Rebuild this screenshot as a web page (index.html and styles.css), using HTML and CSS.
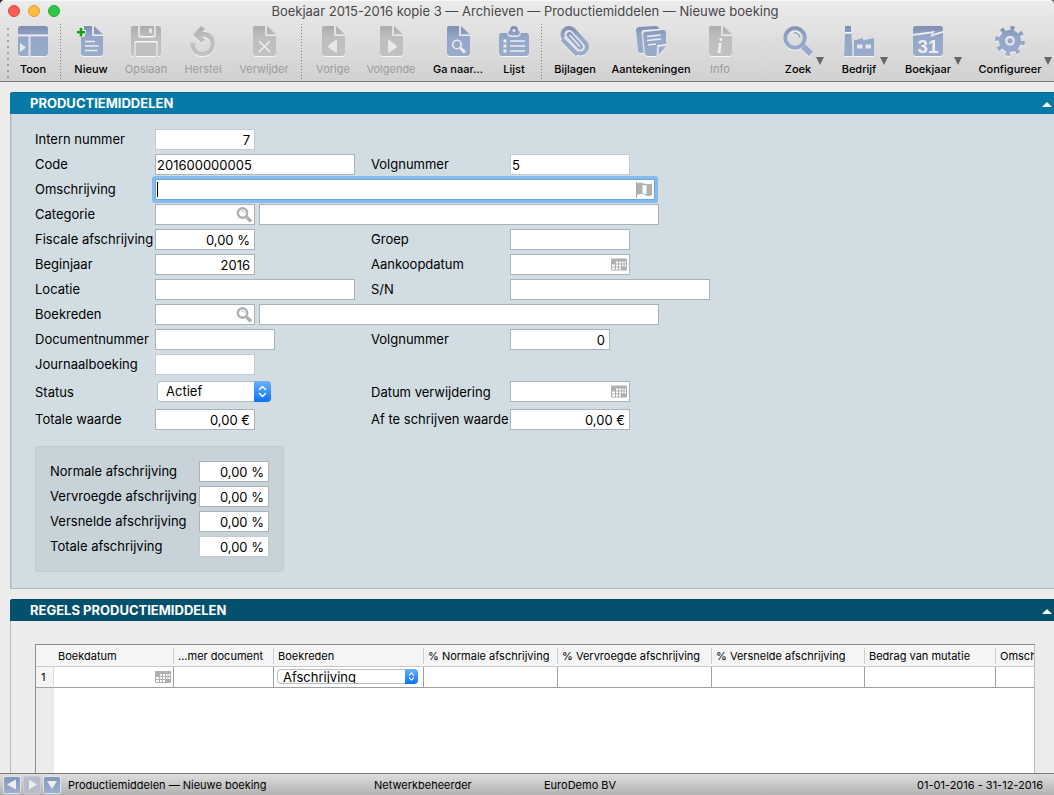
FILE: index.html
```html
<!DOCTYPE html>
<html lang="nl">
<head>
<meta charset="utf-8">
<title>Boekjaar 2015-2016 kopie 3 — Archieven — Productiemiddelen — Nieuwe boeking</title>
<link rel="stylesheet" href="styles.css">
</head>
<body>
<svg class="defs" width="0" height="0" aria-hidden="true">
  <defs>
    <linearGradient id="blue" x1="0" y1="0" x2="0" y2="30" gradientUnits="userSpaceOnUse"><stop offset="0" stop-color="#7f8fb0"/><stop offset=".35" stop-color="#93a6c8"/><stop offset="1" stop-color="#9aaccc"/></linearGradient>
    <linearGradient id="gray" x1="0" y1="0" x2="0" y2="30" gradientUnits="userSpaceOnUse"><stop offset="0" stop-color="#acacac"/><stop offset=".35" stop-color="#bdbdbd"/><stop offset="1" stop-color="#c2c2c2"/></linearGradient>
    <symbol id="page" viewBox="0 0 30 30"><path d="M6 0H16V10H27V27Q27 30 24 30H7Q4 30 4 27V2Q4 0 6 0Z"/><path d="M18 0L27 8.500H18Z"/></symbol>
    <symbol id="lens" viewBox="0 0 16 16"><circle cx="6.500" cy="6" r="4.700" fill="none" stroke="#b0b0b0" stroke-width="2.400"/><path d="M5.500 4.200Q8 3.500 8.600 6" fill="none" stroke="#c4c4c4"/><path d="M10.500 10L15 14.500" stroke="#b0b0b0" stroke-width="3.400"/></symbol>
    <symbol id="cal" viewBox="0 0 16 13"><rect width="16" height="12" rx="1" fill="#b0b0b0"/><path d="M5 3h2v2H5zM8 3h2v2H8zM11 3h1.500v2H11zM13.500 3H15v2h-1.500zM1 6h3v2H1zM5 6h2v2H5zM8 6h2v2H8zM11 6h1.500v2H11zM13.500 6H15v2h-1.500zM1 9h3v2H1zM5 9h2v2H5zM8 9h2v2H8z" fill="#fff"/></symbol>
    <symbol id="updown" viewBox="0 0 17 21"><path d="M5.500 8.500L8.500 5.500L11.500 8.500M5.500 12.500L8.500 15.500L11.500 12.500" fill="none" stroke="#fff" stroke-width="1.500" stroke-linecap="round" stroke-linejoin="round"/></symbol>
  </defs>
</svg>

<header class="chrome">
  <div class="titlebar">
    <div class="lights">
      <button class="light red" aria-label="Sluit"></button>
      <button class="light amber" aria-label="Minimaliseer"></button>
      <button class="light green" aria-label="Vergroot"></button>
    </div>
    <h1>Boekjaar 2015-2016 kopie 3 — Archieven — Productiemiddelen — Nieuwe boeking</h1>
  </div>
  <div class="toolbar">
    <div class="group first">
      <span class="grip"></span>
      <button class="tool t42"><svg viewBox="0 0 30 30"><path d="M3 0H27Q30 0 30 3V8.500H0V3Q0 0 3 0ZM0 10.500H10.500V30H3Q0 30 0 27ZM12.500 10.500H30V27Q30 30 27 30H12.500Z"/><path d="M2 17L8 21.500L2 26Z" class="lite"/></svg>Toon</button>
    </div>
    <div class="group">
      <button class="tool t56"><svg viewBox="0 0 30 30"><path d="M8 0H16V10H27V27Q27 30 24 30H8Q5 30 5 27V11H9V8H10V4H8Z"/><path d="M18 0L27 8.500H18Z"/><path d="M9 15.500H19M9 20H22.500M9 24.500H21.500" class="line"/><path d="M5 2V10.500M1 6.200H9" stroke="#12a312" stroke-width="2.600" fill="none"/></svg>Nieuw</button>
      <button class="tool t54" disabled><svg viewBox="0 0 30 30"><path d="M2 0H7V9Q7 12 10 12H22Q25 12 25 9V0H28L30 2V28Q30 30 28 30H27V17Q27 15 25 15H5Q3 15 3 17V30H2Q0 30 0 28V2Q0 0 2 0Z"/><path d="M9 0H23V8Q23 10 21 10H11Q9 10 9 8Z"/><path d="M18 2.500H21V7H18Z" class="lite"/><path d="M5 18Q5 17 6 17H24Q25 17 25 18V30H5Z"/></svg>Opslaan</button>
      <button class="tool t60" disabled><svg viewBox="0 0 30 30"><path d="M13 0L17 3L14.500 6Q26 6 27 17Q26 30 14 30Q3 30 2 17H6.500Q7.500 26 14.500 26Q22.500 25 22.500 17.500Q22 11 14 10.500L17 14L13.500 17L5 9Z"/></svg>Herstel</button>
      <button class="tool t62" disabled><svg viewBox="0 0 30 30"><use href="#page"/><path d="M10 15L21 26M21 15L10 26" class="line"/></svg>Verwijder</button>
    </div>
    <div class="group">
      <button class="tool t50" disabled><svg viewBox="0 0 30 30"><use href="#page"/><path d="M19 14.500V25.500Q19 27.500 17 26L10.500 21.500Q9.500 20.500 10.500 19.500L17 14.500Q19 13 19 14.500Z" class="lite"/></svg>Vorige</button>
      <button class="tool t66" disabled><svg viewBox="0 0 30 30"><use href="#page"/><path d="M12 14.500V25.500Q12 27.500 14 26L20.500 21.500Q21.500 20.500 20.500 19.500L14 14.500Q12 13 12 14.500Z" class="lite"/></svg>Volgende</button>
      <button class="tool t68"><svg viewBox="0 0 30 30"><use href="#page"/><circle cx="14" cy="18.500" r="4.300" class="line"/><path d="M17.500 22L22 26.500" class="line thick"/></svg>Ga naar...</button>
      <button class="tool t44"><svg viewBox="0 0 30 30"><path d="M3 7H8Q9 11 12 11H18Q21 11 22 7H27Q30 7 30 10V27Q30 30 27 30H3Q0 30 0 27V10Q0 7 3 7Z"/><path fill-rule="evenodd" d="M15 0Q19 0 19 4Q19 5 21 6Q20.500 9.500 18 9.500H12Q9.500 9.500 9 6Q11 5 11 4Q11 0 15 0ZM15 3A1.600 1.600 0 1 0 15 6.200A1.600 1.600 0 1 0 15 3Z"/><path d="M11 15H26M11 20H26M11 25H26" class="line"/><path d="M4.500 15H7.500M4.500 20H7.500M4.500 25H7.500" class="line thick"/></svg>Lijst</button>
    </div>
    <div class="group">
      <button class="tool t60"><svg viewBox="0 0 30 30"><g class="clip"><path d="M9 8.500L20.500 21" class="w17"/><path d="M4 14.500L16 27" class="w5"/><path d="M4.500 11.500L18 25" class="cut"/><path d="M9 8.500L20.500 21" class="w9 cut"/><path d="M9.500 9L20 20.500" class="w7"/><path d="M10 9.500L19.500 20" class="cut"/></g></svg>Bijlagen</button>
      <button class="tool t92"><svg viewBox="0 0 30 30"><path d="M3 1L20 0Q22.500 0 23 3L8 4Q5 4.500 5.500 7L7.500 27H4Q2 27 2 25L0 4Q0 1.500 3 1Z"/><path d="M9 6L27 4Q30 4 30 7L30 18L22 19Q21 19 21 21L20.500 30H12Q9.500 30 9 27.500L7 9Q7 6.500 9 6Z"/><path d="M23 21L30 20L23 29Z"/><path d="M11 10.500L24.500 9M11 14.500L25 13M12 19L20 18" class="line"/></svg>Aantekeningen</button>
      <button class="tool t46" disabled><svg viewBox="0 0 30 30"><use href="#page"/><text x="12" y="27" class="info">i</text></svg>Info</button>
    </div>
    <div class="menus">
      <button class="menu"><span class="tool t32"><svg viewBox="0 0 30 30"><circle cx="12" cy="12" r="9.700" class="ink"/><path d="M11 7Q16 7 17 12" class="ink thin"/><path d="M20 20.500L28 28" class="ink fat"/></svg>Zoek</span><i></i></button>
      <button class="menu"><span class="tool t38"><svg viewBox="0 0 30 30"><path d="M1 0H7V6H1ZM1 8H7.500L8.500 30H0ZM10 14.500L19 12V14.500L30 12V30H10Z"/><path d="M13 18.500H18.500V22.500H13ZM21.500 18.500H27V22.500H21.500Z" class="lite"/></svg>Bedrijf</span><i></i></button>
      <button class="menu"><span class="tool t48"><svg viewBox="0 0 30 30"><path d="M3 0H27Q30 0 30 3V5L20 8L22 5L0 8V3Q0 0 3 0Z"/><path d="M0 10L19 7.500L17 11L30 7V27Q30 30 27 30H3Q0 30 0 27Z"/><text x="15" y="27" class="day">31</text></svg>Boekjaar</span><i></i></button>
      <button class="menu"><span class="tool t64"><svg viewBox="0 0 30 30"><circle cx="15" cy="15" r="8" class="ink gear"/><circle cx="15" cy="15" r="12.700" class="ink teeth"/><circle cx="15" cy="15" r="2.500"/></svg>Configureer</span><i></i></button>
    </div>
  </div>
</header>

<main>
  <section class="panel assets">
    <h2>PRODUCTIEMIDDELEN<i></i></h2>
    <form class="body">
      <div class="row"><label for="intern">Intern nummer</label><input id="intern" class="w100 num soft" value="7"></div>
      <div class="row"><label for="code">Code</label><input id="code" class="w200" value="201600000005"><label for="volg1">Volgnummer</label><input id="volg1" class="w120 soft" value="5"></div>
      <div class="row"><label for="oms">Omschrijving</label><span class="field w500 wide"><input id="oms" class="focused"><svg class="flag" viewBox="0 0 16 16"><path d="M.500 0V16" stroke="#a8a8a8"/><path d="M1 1Q4 0 6 1T16 2V13Q12 15 9 13T1 13Z" fill="#b0b0b0"/><path d="M6.500 3Q8.500 3.500 10.500 3V12Q8.500 12 6.500 11.500Z" fill="#fff"/></svg></span></div>
      <div class="row"><label for="cat">Categorie</label><span class="wide pair"><span class="field w100"><input id="cat"><svg><use href="#lens"/></svg></span><input class="w400" aria-label="Categorie omschrijving"></span></div>
      <div class="row"><label for="fisc">Fiscale afschrijving</label><input id="fisc" class="w100 num" value="0,00 %"><label for="groep">Groep</label><input id="groep" class="w120"></div>
      <div class="row"><label for="begin">Beginjaar</label><input id="begin" class="w100 num" value="2016"><label for="aank">Aankoopdatum</label><span class="field w120"><input id="aank"><svg><use href="#cal"/></svg></span></div>
      <div class="row"><label for="loc">Locatie</label><input id="loc" class="w200"><label for="sn">S/N</label><input id="sn" class="w200"></div>
      <div class="row"><label for="reden">Boekreden</label><span class="wide pair"><span class="field w100"><input id="reden"><svg><use href="#lens"/></svg></span><input class="w400" aria-label="Boekreden omschrijving"></span></div>
      <div class="row"><label for="doc">Documentnummer</label><input id="doc" class="w120"><label for="volg2">Volgnummer</label><input id="volg2" class="w100 num" value="0"></div>
      <div class="row"><label for="jour">Journaalboeking</label><input id="jour" class="w100 soft"></div>
      <div class="row status"><label for="stat">Status</label><span class="popup"><select id="stat"><option>Actief</option></select><svg><use href="#updown"/></svg></span><label for="verw">Datum verwijdering</label><span class="field w120"><input id="verw"><svg><use href="#cal"/></svg></span></div>
      <div class="row"><label for="tot">Totale waarde</label><input id="tot" class="w100 num" value="0,00 €"><label for="af">Af te schrijven waarde</label><input id="af" class="w120 num" value="0,00 €"></div>
      <fieldset>
        <div class="pct"><label for="p1">Normale afschrijving</label><input id="p1" class="w70 num" value="0,00 %"></div>
        <div class="pct"><label for="p2">Vervroegde afschrijving</label><input id="p2" class="w70 num" value="0,00 %"></div>
        <div class="pct"><label for="p3">Versnelde afschrijving</label><input id="p3" class="w70 num" value="0,00 %"></div>
        <div class="pct"><label for="p4">Totale afschrijving</label><input id="p4" class="w70 num soft" value="0,00 %"></div>
      </fieldset>
    </form>
  </section>

  <section class="panel lines">
    <h2>REGELS PRODUCTIEMIDDELEN<i></i></h2>
    <div class="list">
      <div class="grid">
        <table>
          <thead><tr><th></th><th>Boekdatum</th><th>...mer document</th><th>Boekreden</th><th>% Normale afschrijving</th><th>% Vervroegde afschrijving</th><th>% Versnelde afschrijving</th><th>Bedrag van mutatie</th><th>Omschrijving</th></tr></thead>
          <tbody><tr><td class="no">1</td><td><div class="date"><svg><use href="#cal"/></svg></div></td><td></td><td><span class="popup mini"><select aria-label="Boekreden"><option>Afschrijving</option></select><svg><use href="#updown"/></svg></span></td><td></td><td></td><td></td><td></td><td></td></tr></tbody>
        </table>
      </div>
    </div>
  </section>
</main>

<footer>
  <div class="nav">
    <button aria-label="Vorige"><svg viewBox="0 0 16 16"><path d="M12 2.500V12.500L3 7.500Z"/></svg></button>
    <button aria-label="Volgende" disabled><svg viewBox="0 0 16 16"><path d="M5 2.500V12.500L13 7.500Z"/></svg></button>
    <button aria-label="Menu"><svg viewBox="0 0 16 16"><path d="M3 4H13L8 12Z"/></svg></button>
  </div>
  <span class="where">Productiemiddelen — Nieuwe boeking</span>
  <span class="user">Netwerkbeheerder</span>
  <span>EuroDemo BV</span>
  <span class="period">01-01-2016 - 31-12-2016</span>
</footer>
</body>
</html>
```
FILE: styles.css
```css
* { box-sizing: border-box; }
body {
  margin: 0;
  height: 100vh;
  display: flex;
  flex-direction: column;
  overflow: hidden;
  background: linear-gradient(90deg, #20262e, #76708c);
  font: 13px/16px Inter, "Liberation Sans", sans-serif;
  color: #000;
}
button, input, select { font: inherit; color: inherit; margin: 0; }
button { border: 0; padding: 0; background: none; }
.defs { position: absolute; }

.chrome {
  flex: none;
  border-radius: 5px 5px 0 0;
  border-bottom: 1px solid #7c7c7c;
  box-shadow: inset 0 1px 0 #f8f8f8;
  background: linear-gradient(#ebebeb, #d1d1d1);
}
.titlebar { display: flex; align-items: center; height: 22px; padding: 0 10px 0 8px; }
.titlebar h1 { flex: 1; margin: 0 54px 0 0; font-size: 13px; font-weight: 400; text-align: center; color: #484848; white-space: nowrap; }
.lights { display: flex; gap: 8px; width: 52px; }
.light { width: 12px; height: 12px; border-radius: 50%; border: 1px solid; }
.red { background: #fc5b57; border-color: #e04744; }
.amber { background: #fdbc40; border-color: #dfa033; }
.green { background: #30c749; border-color: #24aa37; }

.toolbar { display: flex; height: 59px; padding-top: 2px; }
.group { display: flex; padding: 0 5px 0 4px; }
.group + .group { background: repeating-linear-gradient(#808080 0 1px, transparent 1px 3px) 0 0 / 1px 55px no-repeat; }
.group.first { padding: 0 6px 0 7px; }
.group:nth-child(2) { padding: 0 6px 0 3px; }
.group:nth-child(3) { padding-left: 7px; }
.grip { width: 3px; height: 50px; margin: 4px 2px 0 0; background: repeating-linear-gradient(#a0a0a0 0 2px, transparent 2px 6px) 0 0 / 2px 100% no-repeat; }
.tool { display: flex; flex-direction: column; align-items: center; gap: 6px; padding-top: 2px; font-size: 11px; line-height: 14px; font-weight: 500; white-space: nowrap; }
.tool svg { width: 30px; height: 30px; flex: none; overflow: visible; fill: url(#blue); filter: drop-shadow(0 1px 0 #f6f6f6); }
.tool:disabled { color: #9c9c9c; font-weight: 400; }
.tool:disabled svg { fill: url(#gray); }
.tool .lite { fill: #e8e8e8; }
.tool .line { fill: none; stroke: #eee; stroke-width: 1.6; }
.tool .thick { stroke-width: 3; }
.tool .ink { fill: none; stroke: url(#blue); stroke-width: 4; }
.tool .thin { stroke-width: 1.5; }
.tool .fat { stroke-width: 6; }
.tool .gear { stroke-width: 6; }
.tool .teeth { stroke-width: 4.6; stroke-dasharray: 4 5.975; }
.clip { fill: none; stroke: url(#blue); stroke-linecap: round; }
.clip .w17 { stroke-width: 17; }
.clip .w9 { stroke-width: 9; }
.clip .w7 { stroke-width: 6; }
.clip .w5 { stroke-width: 5; }
.clip .cut { stroke: #e8e8e8; }
.clip .cut:not(.w9) { stroke-width: 1.5; }
.info { font: italic bold 20px "Liberation Serif", serif; fill: #eee; }
.day { font: bold 19px "Liberation Sans", sans-serif; fill: #eee; text-anchor: middle; }
.t32 { width: 32px; } .t38 { width: 38px; } .t42 { width: 42px; } .t44 { width: 44px; }
.t46 { width: 46px; } .t48 { width: 48px; } .t50 { width: 50px; } .t54 { width: 54px; }
.t56 { width: 56px; } .t60 { width: 60px; } .t62 { width: 62px; } .t64 { width: 64px; }
.t66 { width: 66px; } .t68 { width: 68px; } .t92 { width: 92px; }
.menus { display: flex; gap: 16px; margin-left: auto; padding-right: 2px; }
.menu { display: flex; align-items: flex-start; gap: 2px; }
.menu .tool { flex: none; }
.menu i { margin-top: 33px; border: 4px solid transparent; border-top: 8px solid #666; border-bottom: 0; }

main { flex: 1; min-height: 0; display: flex; flex-direction: column; gap: 10px; padding: 10px 0 0 10px; background: #ececec; overflow: hidden; }
.panel { display: flex; flex-direction: column; flex: none; }
.panel h2 {
  display: flex; align-items: center; justify-content: space-between;
  height: 22px; margin: 0; padding: 0 2px 0 20px;
  border-radius: 3px 0 0 0;
  color: #fff; font-size: 13px; line-height: 22px; font-weight: 700;
}
.panel h2 i { margin-top: 3px; border: 5px solid transparent; border-bottom: 5px solid #fff; border-top: 0; }
.assets h2 { background: #0679a6; box-shadow: inset 0 1px 0 #056a92; }
.lines h2 { background: #04516d; box-shadow: inset 0 1px 0 #04475f; }

.body {
  display: flex; flex-direction: column; gap: 4px;
  padding: 15px 24px 16px;
  background: #d1dde2;
  border: solid #b0babd; border-width: 0 0 1px 1px;
  box-shadow: inset 1px 0 0 #c2cdd1;
}
.row { display: grid; grid-template-columns: 120px 216px 139px 1fr; align-items: center; height: 21px; }
.row.status { height: 26px; padding: 2px 0 3px; }
.row label, .pct label { white-space: nowrap; padding-bottom: 2px; }
.row.status label { padding-bottom: 0; }
.wide { grid-column: 2 / -1; }
.pair { display: flex; gap: 4px; }
input {
  height: 21px; padding: 1px 1px 0;
  border: 1px solid #aab4b8; border-radius: 0; outline: 0;
  background: #fff;
}
.soft { border-color: #c3cdd1; }
.num { text-align: right; padding-right: 4px; }
.w70 { width: 70px; } .w100 { width: 100px; } .w120 { width: 120px; }
.w200 { width: 200px; } .w400 { width: 400px; } .w500 { width: 500px; }
.field { position: relative; display: flex; }
.field input { width: 100%; }
.field svg { position: absolute; right: 3px; top: 3px; width: 16px; height: 16px; }
.focused {
  border-color: #6ba5e0; box-shadow: 0 0 0 3px #86bbee; border-radius: 1px;
  background: linear-gradient(#000, #000) 1px 2px / 1px 15px no-repeat #fff;
}
.popup { position: relative; display: flex; width: 114px; height: 21px; margin-left: 2px; }
.popup select {
  appearance: none; width: 100%; height: 100%; padding: 0 20px 1px 8px;
  border: 1px solid #b4bdc2; border-radius: 4px; background: #fff; outline: 0;
}
.popup svg { position: absolute; right: 0; top: 0; width: 17px; height: 100%; border-radius: 0 4px 4px 0; background: linear-gradient(#6bb1fa, #0b73fb); pointer-events: none; }

fieldset {
  align-self: flex-start; display: flex; flex-direction: column; gap: 4px;
  margin: 12px 0 0; padding: 14px; width: 249px; height: 126px;
  border: 1px solid #bfcbd0; border-radius: 4px; background: #c7d3d8;
}
.pct { display: flex; align-items: center; justify-content: space-between; height: 21px; }

.panel.lines { flex: 1; min-height: 0; }
.list {
  flex: 1; min-height: 0; display: flex;
  padding: 23px 19px 0 24px; border-left: 1px solid #bbb;
}
.grid {
  flex: 1; min-width: 0; overflow: hidden;
  border: solid #8f8f8f; border-width: 1px 1px 0; border-right-color: #bbb;
  background: linear-gradient(90deg, #ececec 18px, #fff 18px);
}
table { width: 100%; table-layout: fixed; border-collapse: separate; border-spacing: 0; font-size: 11px; line-height: 14px; }
th:nth-child(1) { width: 18px; } th:nth-child(2) { width: 120px; } th:nth-child(3) { width: 100px; }
th:nth-child(4) { width: 150px; } th:nth-child(5) { width: 134px; } th:nth-child(6) { width: 154px; }
th:nth-child(7) { width: 153px; } th:nth-child(8) { width: 131px; }
th {
  height: 22px; padding: 0 4px; text-align: left; font-weight: 400; white-space: nowrap; overflow: hidden;
  border-bottom: 1px solid #c8c8c8;
  background: linear-gradient(#d0d0d0, #d0d0d0) 100% 3px / 1px 16px no-repeat #f5f5f5;
}
td { height: 21px; padding: 0; border-right: 1px solid #a0a0a0; border-bottom: 1px solid #a0a0a0; background: #fff; }
.no { padding-left: 5px; background: #f5f5f5; border-right-color: #ddd; }
th:first-child, th:last-child { background-image: none; }
th:last-child { padding-right: 0; }
td:last-child { border-right: 0; }
.date { display: flex; justify-content: flex-end; padding-right: 2px; }
.date svg { width: 16px; height: 13px; }
.popup.mini { width: 141px; height: 15px; margin: -2px 0 0 3px; font-size: 13px; line-height: 15px; }
.mini select { padding: 0 16px 0 5px; }
.mini svg { width: 13px; }

footer {
  flex: none; display: flex; align-items: center; height: 22px; padding: 0 11px 0 4px;
  border-top: 1px solid #777; background: linear-gradient(#dedede, #b2b2b2);
  font-size: 11px; line-height: 14px; white-space: nowrap;
}
.nav { display: flex; gap: 4px; width: 64px; }
.nav button { width: 16px; height: 16px; border-radius: 2px; background: linear-gradient(#8396b9, #9db0d0); box-shadow: 0 0 0 1px #dfe3ea; }
.nav button:disabled { background: #b6bcc8; box-shadow: 0 0 0 1px #c9ccd2; }
.nav svg { display: block; width: 16px; height: 16px; fill: #eee; }
.where { width: 306px; }
.user { width: 170px; }
.period { margin-left: auto; }
```
